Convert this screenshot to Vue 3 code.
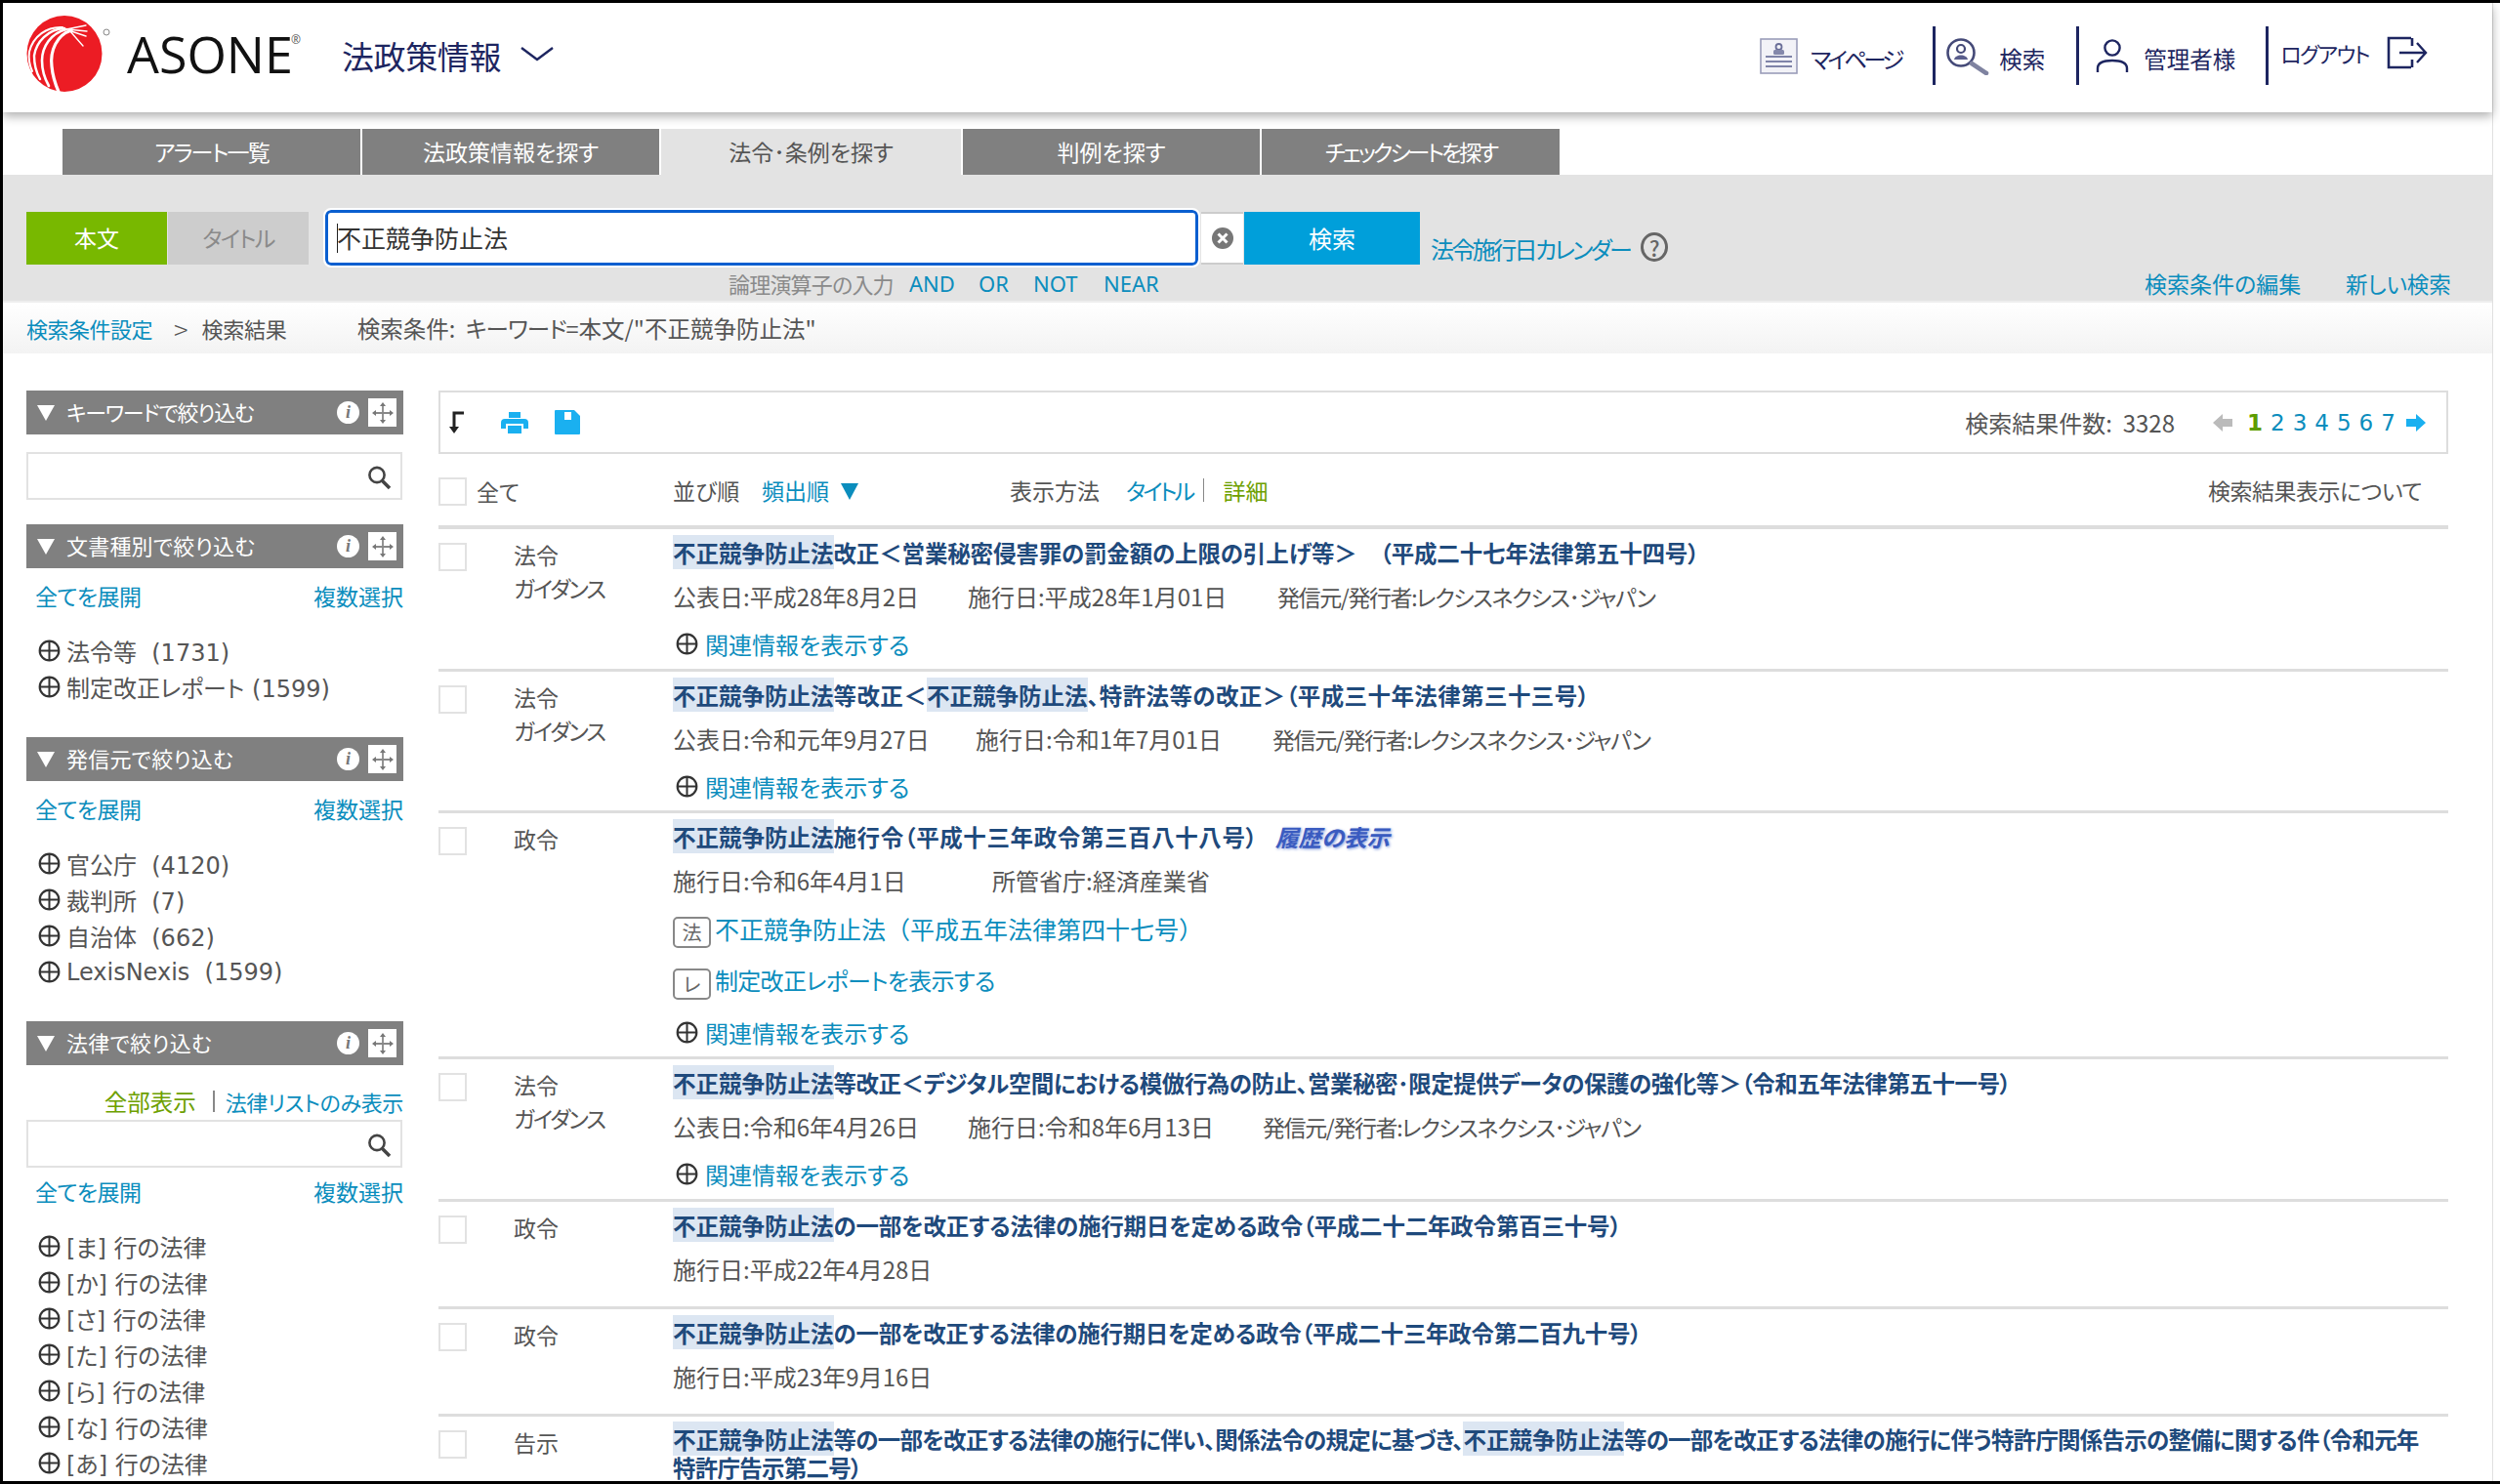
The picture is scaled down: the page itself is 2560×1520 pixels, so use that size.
<template>
  <div class="frame">
    <div class="page">
      <!-- header -->
      <header class="top">
        <div class="logo">
          <svg class="logo-mark" viewBox="0 0 110 95" width="110" height="95">
            <ellipse cx="50" cy="45" rx="38.5" ry="39" fill="#ec1c24" />
            <g fill="none" stroke="#fff" stroke-linecap="round">
              <path d="M57 21C42 26 35 42 37 58C38 69 41 77 44 84" stroke-width="3.2" />
              <path d="M52 20C36 24 27 38 27 52C27 63 30 71 34 78" stroke-width="2.6" />
              <path d="M50 19C33 20 21 33 19 47C19 56 21 64 25 71" stroke-width="2.4" />
              <path d="M48 18C32 17 18 27 14 43C13 50 14 56 17 63" stroke-width="2" />
              <path d="M52 20L72 16M53 20L73 22M54 21L72 27M55 21L69 37" stroke-width="1.4" />
            </g>
            <circle cx="93" cy="23" r="3" fill="none" stroke="#888" stroke-width="1" />
          </svg>
          <span class="logo-text">ASONE<sup>®</sup></span>
        </div>
        <div class="app-name">法政策情報</div>
        <svg class="chevron" width="36" height="16" viewBox="0 0 36 16">
          <path d="M2 2L18 14L34 2" fill="none" stroke="#1d2560" stroke-width="2.4" />
        </svg>

        <nav class="top-nav">
          <a class="nav-item mypage">
            <svg width="39" height="37" viewBox="0 0 39 37">
              <rect x="1" y="1" width="37" height="35" fill="#f2f2f7" stroke="#9a9db9" stroke-width="1.6" />
              <circle cx="19.5" cy="9" r="3" fill="none" stroke="#6a6e98" stroke-width="1.8" />
              <rect x="14" y="12" width="11" height="5" rx="1.5" fill="#8488ab" />
              <path d="M6 19H33M6 24H33M6 29H33" stroke="#7f83a8" stroke-width="2" />
            </svg>
            <span>マイページ</span>
          </a>
          <a class="nav-item search">
            <svg width="44" height="39" viewBox="0 0 44 39">
              <circle cx="15" cy="16" r="13.5" fill="none" stroke="#454a78" stroke-width="2.6" />
              <circle cx="15" cy="12" r="4" fill="none" stroke="#454a78" stroke-width="2.2" />
              <path d="M8 23C9 17 21 17 22 23Z" fill="#5a5e8c" />
              <path d="M26 27L41 37" stroke="#7f83a0" stroke-width="4.6" stroke-linecap="round" />
            </svg>
            <span>検索</span>
          </a>
          <a class="nav-item admin">
            <svg width="34" height="35" viewBox="0 0 34 35">
              <circle cx="17" cy="9" r="7.6" fill="none" stroke="#1d2560" stroke-width="2.4" />
              <path d="M2 34V30C2 24 8 22 17 22C26 22 32 24 32 30V34" fill="none" stroke="#1d2560" stroke-width="2.4" />
            </svg>
            <span>管理者様</span>
          </a>
          <a class="nav-item logout">
            <span>ログアウト</span>
            <svg width="42" height="34" viewBox="0 0 42 34">
              <path d="M25 2H2V32H25M26 32V24M26 10V2" fill="none" stroke="#1d2560" stroke-width="2.6" />
              <path d="M13 17H39M31 7L40 17L31 27" fill="none" stroke="#1d2560" stroke-width="2.4" />
            </svg>
          </a>
        </nav>
      </header>

      <!-- tabs -->
      <div class="tabs">
        <a
          v-for="tab in tabs"
          :key="tab.label"
          class="tab"
          :class="{ active: tab.active }"
          :style="{ width: tab.width + 'px', letterSpacing: tab.ls + 'px' }"
        >{{ tab.label }}</a>
      </div>

      <!-- search panel -->
      <section class="search-panel">
        <div class="search-row">
          <button class="mode on">本文</button>
          <button class="mode kana">タイトル</button>
          <div class="keyword"><span class="caret"></span>不正競争防止法</div>
          <div class="clear">
            <svg width="24" height="24" viewBox="0 0 24 24">
              <circle cx="12" cy="12" r="11" fill="#777" />
              <path d="M7.5 7.5L16.5 16.5M16.5 7.5L7.5 16.5" stroke="#fff" stroke-width="3" />
            </svg>
          </div>
          <button class="go">検索</button>
          <a class="calendar">法令施行日カレンダー</a>
          <span class="help">?</span>
        </div>
        <div class="op-row">
          <span class="op-label">論理演算子の入力</span>
          <a class="op and">AND</a>
          <a class="op or">OR</a>
          <a class="op not">NOT</a>
          <a class="op near">NEAR</a>
          <a class="edit">検索条件の編集</a>
          <a class="fresh">新しい検索</a>
        </div>
      </section>

      <div class="crumb">
        <a class="crumb-link">検索条件設定</a>
        <span class="crumb-gt">&gt;</span>
        <span class="crumb-now">検索結果</span>
        <span class="crumb-cond">検索条件:&nbsp;&nbsp;<span class="crumb-kana">キーワード</span>=本文/"不正競争防止法"</span>
      </div>

      <div class="body">
        <!-- filter column -->
        <aside class="side">
          <div v-for="panel in panels" :key="panel.title" class="panel">
            <div class="panel-head">
              <span class="tri"></span>
              <span class="panel-title" :style="{ letterSpacing: panel.ls + 'px' }">{{ panel.title }}</span>
              <span class="info">i</span>
              <span class="move">
                <svg width="24" height="24" viewBox="0 0 24 24">
                  <path d="M12 3V21M3 12H21" stroke="#888" stroke-width="1.8" />
                  <path d="M12 1L15 5H9ZM12 23L15 19H9ZM1 12L5 9V15ZM23 12L19 9V15Z" fill="#777" />
                </svg>
              </span>
            </div>
            <div v-if="panel.lawLinks" class="law-links">
              <a class="green">全部表示</a>
              <span class="bar"></span>
              <a class="list-only">法律リストのみ表示</a>
            </div>
            <div v-if="panel.search" class="side-search" :class="{ tight: panel.lawLinks }">
              <svg width="26" height="26" viewBox="0 0 26 26">
                <circle cx="11" cy="10.5" r="7.6" fill="none" stroke="#444" stroke-width="2.6" />
                <path d="M16.5 16.5L24 24" stroke="#444" stroke-width="3.6" />
              </svg>
            </div>
            <div v-if="panel.items" class="side-links">
              <a>全てを展開</a>
              <a>複数選択</a>
            </div>
            <ul v-if="panel.items" class="side-list">
              <li v-for="item in panel.items" :key="item">
                <svg class="plus" width="23" height="23" viewBox="0 0 23 23">
                  <circle cx="11.5" cy="11.5" r="9.8" fill="none" stroke="#333" stroke-width="2.2" />
                  <path d="M11.5 1V22M1 11.5H22" stroke="#333" stroke-width="2" />
                </svg>
                <span>{{ item }}</span>
              </li>
            </ul>
          </div>
        </aside>

        <!-- results -->
        <main class="results">
          <div class="toolbar">
            <svg class="tool-sort" width="18" height="24" viewBox="0 0 18 24">
              <path d="M16 2H6V20" fill="none" stroke="#222" stroke-width="3" />
              <path d="M1 16H11L6 23Z" fill="#222" />
            </svg>
            <svg class="tool-print" width="28" height="24" viewBox="0 0 28 24">
              <path d="M8 1H20V7H8ZM4 8H24Q28 8 28 12V18H23V13H5V18H0V12Q0 8 4 8ZM7 15H21V23H7Z" fill="#1ab0f0" />
            </svg>
            <svg class="tool-save" width="26" height="25" viewBox="0 0 26 25">
              <path d="M1 0H20L26 6V24Q26 25 25 25H1Q0 25 0 24V1Q0 0 1 0Z" fill="#1ab0f0" />
              <rect x="10" y="2" width="7" height="8" fill="#fff" />
            </svg>
            <span class="count">検索結果件数:&nbsp;&nbsp;3328</span>
            <svg class="arrow" width="20" height="20" viewBox="0 0 20 20">
              <path d="M0 10L10 1V6H20V14H10V19Z" fill="#bbb" />
            </svg>
            <span class="pages">
              <a
                v-for="n in 7"
                :key="n"
                class="page-no"
                :class="{ current: n === 1 }"
              >{{ n }}</a>
            </span>
            <svg class="arrow next" width="20" height="20" viewBox="0 0 20 20">
              <path d="M20 10L10 1V6H0V14H10V19Z" fill="#1ab0f0" />
            </svg>
          </div>

          <div class="sort-bar">
            <span class="check"></span>
            <span class="all">全て</span>
            <span class="sort-label">並び順</span>
            <a class="sort-value">頻出順</a>
            <span class="sort-tri"></span>
            <span class="view-label">表示方法</span>
            <a class="view-title">タイトル</a>
            <span class="view-bar"></span>
            <a class="view-detail">詳細</a>
            <span class="about">検索結果表示について</span>
          </div>

          <div v-for="(row, i) in rows" :key="i" class="row" :class="row.cls">
            <span class="check"></span>
            <div class="kind">
              <div v-for="k in row.kind" :key="k" :class="{ narrow: k.length > 2 }">{{ k }}</div>
            </div>
            <div class="row-main">
              <div class="title" :style="{ letterSpacing: row.ls + 'px' }">
                <template v-for="(part, j) in row.title" :key="j">
                  <mark v-if="part.hl">{{ part.hl }}</mark>
                  <template v-else>{{ part }}</template>
                </template>
                <em v-if="row.history" class="history">履歴の表示</em>
              </div>
              <div class="meta">
                <span
                  v-for="(m, j) in row.meta"
                  :key="j"
                  :class="{ source: m.t === LEXIS }"
                  :style="{ width: m.w + 'px' }"
                >{{ m.t }}</span>
              </div>
              <div v-for="doc in row.docs" :key="doc.mark" class="doc" :class="doc.cls">
                <span class="doc-mark">{{ doc.mark }}</span>
                <a>{{ doc.text }}</a>
              </div>
              <div v-if="row.related" class="related">
                <svg class="plus" width="23" height="23" viewBox="0 0 23 23">
                  <circle cx="11.5" cy="11.5" r="9.8" fill="none" stroke="#333" stroke-width="2.2" />
                  <path d="M11.5 1V22M1 11.5H22" stroke="#333" stroke-width="2" />
                </svg>
                <a>関連情報を表示する</a>
              </div>
            </div>
          </div>
        </main>
      </div>
    </div>
  </div>
</template>

<script setup>
const tabs = [
  { label: "アラート一覧", width: 307, ls: -1.8 },
  { label: "法政策情報を探す", width: 306, ls: 0 },
  { label: "法令･条例を探す", width: 309, ls: 0 },
  { label: "判例を探す", width: 306, ls: 0 },
  { label: "チェックシートを探す", width: 307, ls: -3 },
];
tabs[2].active = true;

const gyo = ["ま", "か", "さ", "た", "ら", "な", "あ"].map((k) => `[${k}] 行の法律`);

const panels = [
  { title: "キーワードで絞り込む", search: true, ls: -1.3 },
  { title: "文書種別で絞り込む", ls: 0.2, items: ["法令等  (1731)", "制定改正レポート (1599)"] },
  { title: "発信元で絞り込む", ls: 0.2, items: ["官公庁  (4120)", "裁判所  (7)", "自治体  (662)", "LexisNexis  (1599)"] },
  { title: "法律で絞り込む", ls: 0.2, lawLinks: true, search: true, items: gyo },
];

const HL = { hl: "不正競争防止法" };
const LEXIS = "発信元/発行者:レクシスネクシス･ジャパン";

const rows = [
  {
    cls: "first",
    ls: -0.15,
    kind: ["法令", "ガイダンス"],
    title: [HL, "改正＜営業秘密侵害罪の罰金額の上限の引上げ等＞　（平成二十七年法律第五十四号）"],
    meta: [{ t: "公表日:平成28年8月2日", w: 302 }, { t: "施行日:平成28年1月01日", w: 317 }, { t: LEXIS }],
    related: true,
  },
  {
    ls: 0.4,
    kind: ["法令", "ガイダンス"],
    title: [HL, "等改正＜", HL, "、特許法等の改正＞（平成三十年法律第三十三号）"],
    meta: [{ t: "公表日:令和元年9月27日", w: 310 }, { t: "施行日:令和1年7月01日", w: 304 }, { t: LEXIS }],
    related: true,
  },
  {
    cls: "tall",
    ls: 0.6,
    kind: ["政令"],
    title: [HL, "施行令（平成十三年政令第三百八十八号）"],
    history: true,
    meta: [{ t: "施行日:令和6年4月1日", w: 327 }, { t: "所管省庁:経済産業省" }],
    docs: [
      { mark: "法", text: "不正競争防止法（平成五年法律第四十七号）", cls: "full" },
      { mark: "レ", text: "制定改正レポートを表示する" },
    ],
    related: true,
  },
  {
    cls: "first",
    ls: -0.47,
    kind: ["法令", "ガイダンス"],
    title: [HL, "等改正＜デジタル空間における模倣行為の防止、営業秘密･限定提供データの保護の強化等＞（令和五年法律第五十一号）"],
    meta: [{ t: "公表日:令和6年4月26日", w: 302 }, { t: "施行日:令和8年6月13日", w: 302 }, { t: LEXIS }],
    related: true,
  },
  {
    cls: "short",
    ls: -0.2,
    kind: ["政令"],
    title: [HL, "の一部を改正する法律の施行期日を定める政令（平成二十二年政令第百三十号）"],
    meta: [{ t: "施行日:平成22年4月28日" }],
  },
  {
    cls: "short",
    ls: -0.27,
    kind: ["政令"],
    title: [HL, "の一部を改正する法律の施行期日を定める政令（平成二十三年政令第二百九十号）"],
    meta: [{ t: "施行日:平成23年9月16日" }],
  },
  {
    cls: "last",
    ls: -0.76,
    kind: ["告示"],
    title: [HL, "等の一部を改正する法律の施行に伴い、関係法令の規定に基づき、", HL, "等の一部を改正する法律の施行に伴う特許庁関係告示の整備に関する件（令和元年特許庁告示第二号）"],
    meta: [],
  },
];
</script>

<style>
html,
body {
  margin: 0;
  background: #fff;
}
</style>

<style scoped>
.frame {
  width: 2560px;
  height: 1520px;
  box-sizing: border-box;
  border-top: 3px solid #000;
  border-bottom: 3px solid #000;
  border-left: 3px solid #000;
  background: #fff;
  overflow: hidden;
  font-family: "Noto Sans CJK JP", sans-serif;
  font-feature-settings: "palt";
  color: #555;
}
.page {
  width: 2549px;
  height: 100%;
  border-right: 1px solid #e0e0e0;
  box-sizing: content-box;
}
a {
  color: #0b8dbd;
}

/* header */
.top {
  height: 112px;
  display: flex;
  align-items: flex-start;
  background: #fff;
  box-shadow: 0 4px 10px rgba(0, 0, 0, 0.32);
  position: relative;
}
.logo {
  display: flex;
  width: 300px;
}
.logo-mark {
  margin: 7px 0 0 13px;
  flex: none;
}
.logo-text {
  margin: 17px 0 0 4px;
  font-family: "Open Sans", sans-serif;
  font-size: 52px;
  line-height: 70px;
  letter-spacing: 0;
  color: #111;
}
.logo-text sup {
  font-size: 12px;
  margin-left: -2px;
  vertical-align: 30px;
  line-height: 0;
  color: #555;
}
.app-name {
  margin: 32px 0 0 47px;
  font-size: 33px;
  line-height: 44px;
  color: #1d2560;
  letter-spacing: -0.4px;
}
.chevron {
  margin: 44px 0 0 19px;
}
.top-nav {
  margin-left: auto;
  margin-right: 66px;
  margin-top: 24px;
  display: flex;
  height: 60px;
}
.nav-item {
  display: flex;
  align-items: center;
  color: #1d2560;
  font-size: 23.5px;
}
.nav-item span {
  padding-top: 6px;
}
.mypage {
  gap: 13px;
  padding-right: 33px;
}
.mypage span {
  letter-spacing: -3.8px;
}
.search {
  gap: 10px;
  padding: 0 32px 0 11px;
  border-left: 3px solid #1d2560;
}
.admin {
  gap: 15px;
  padding: 0 31px 0 17px;
  border-left: 3px solid #1d2560;
}
.logout {
  gap: 18px;
  padding-left: 12px;
  border-left: 3px solid #1d2560;
  font-size: 22px;
}
.logout span {
  padding: 0 0 6px;
  letter-spacing: -1.6px;
}
.logout svg {
  margin-top: -6px;
}

/* tabs */
.tabs {
  display: flex;
  gap: 1px;
  padding: 17px 0 0 61px;
  height: 47px;
}
.tab {
  height: 47px;
  box-sizing: border-box;
  margin-right: -1px;
  padding-bottom: 2px;
  border-right: 2px solid #fff;
  background: #808080;
  color: #fff;
  font-size: 23px;
  display: flex;
  align-items: center;
  justify-content: center;
}
.tab.active {
  background: #e3e3e3;
  color: #555;
}

/* search panel */
.search-panel {
  height: 131px;
  box-sizing: border-box;
  margin-top: 0;
  background: #e3e3e3;
  border-bottom: 2px solid #eee;
  padding: 38px 0 0 24px;
}
.search-row {
  display: flex;
  align-items: flex-start;
  height: 54px;
}
.mode {
  width: 144px;
  height: 54px;
  margin-right: 1px;
  border: none;
  padding: 0 0 2px;
  background: #cdcdcd;
  color: #8a8a8a;
  font: inherit;
  font-size: 23px;
  font-feature-settings: "palt";
}
.mode.kana {
  letter-spacing: -1.5px;
}
.mode.on {
  background: #78b800;
  color: #fff;
}
.keyword {
  width: 894px;
  height: 57px;
  margin: -2px 3px 0 16px;
  box-sizing: border-box;
  border: 3px solid #0a5fd0;
  border-radius: 6px;
  outline: 2px solid #fff;
  background: #fff;
  color: #333;
  font-size: 25px;
  line-height: 51px;
  padding-left: 9px;
  display: flex;
  align-items: center;
}
.caret {
  width: 1px;
  height: 30px;
  background: #222;
  margin-right: -1px;
}
.clear {
  width: 43px;
  height: 54px;
  box-sizing: border-box;
  background: #fff;
  border-top: 2px solid #ccc;
  border-bottom: 2px solid #ccc;
  display: flex;
  align-items: center;
  justify-content: center;
}
.go {
  width: 180px;
  height: 54px;
  margin-left: 1px;
  border: none;
  padding: 0 0 2px;
  background: #009fda;
  color: #fff;
  font: inherit;
  font-size: 24px;
}
.calendar {
  margin: 22px 0 0 11px;
  font-size: 24px;
  line-height: 32px;
  letter-spacing: -2.6px;
}
.help {
  width: 28px;
  height: 30px;
  margin: 21px 0 0 11px;
  box-sizing: border-box;
  border: 3px solid #666;
  border-radius: 50%;
  font-size: 22px;
  font-weight: 500;
  line-height: 24px;
  text-align: center;
  color: #666;
}
.op-row {
  display: flex;
  align-items: center;
  height: 32px;
  margin-top: -14px;
  padding-top: 17px;
  box-sizing: content-box;
  font-size: 22px;
}
.op-label {
  margin-left: 719px;
  width: 185px;
  color: #8a8a8a;
  letter-spacing: -0.8px;
}
.op {
  font-family: "Noto Sans", sans-serif;
  letter-spacing: 0;
}
.and {
  width: 71px;
}
.or {
  width: 56px;
}
.not {
  width: 72px;
}
.near {
  width: 1066px;
}
.edit {
  width: 206px;
  font-size: 23px;
}
.fresh {
  font-size: 22.5px;
}

/* breadcrumb */
.crumb {
  height: 52px;
  box-sizing: border-box;
  background: linear-gradient(#fff, #f3f3f3);
  display: flex;
  align-items: center;
  padding: 0 0 0 24px;
  font-size: 22px;
}
.crumb-link {
  letter-spacing: -0.5px;
}
.crumb-gt {
  margin: 0 14px 0 22px;
  font-size: 27px;
  font-weight: 300;
}
.crumb-now {
  letter-spacing: -0.2px;
}
.crumb-cond {
  margin-left: 72px;
  font-size: 23.5px;
}
.crumb-kana {
  letter-spacing: -1px;
}

/* layout */
.body {
  display: flex;
  padding: 38px 0 0 24px;
}
.side {
  width: 386px;
  flex: none;
}
.results {
  width: 2058px;
  margin-left: 36px;
}

/* filter panels */
.panel {
  margin-bottom: 33px;
}
.panel:first-child {
  margin-bottom: 25px;
}
.panel:nth-child(3) {
  margin-bottom: 32px;
}
.panel-head {
  height: 45px;
  background: #808080;
  display: flex;
  align-items: center;
  color: #fff;
  font-size: 22px;
  padding-bottom: 2px;
  box-sizing: border-box;
}
.tri {
  margin: 2px 12px 0 11px;
  border-left: 9px solid transparent;
  border-right: 9px solid transparent;
  border-top: 16px solid #fff;
}
.panel-title {
  flex: 1;
  padding-bottom: 2px;
}
.info {
  width: 23px;
  height: 23px;
  margin: 2px 9px 0 0;
  border-radius: 50%;
  background: #fff;
  color: #777;
  font: italic bold 18px/23px "Liberation Serif", serif;
  text-align: center;
}
.move {
  width: 29px;
  height: 29px;
  margin: 2px 7px 0 0;
  background: #fff;
  display: flex;
  align-items: center;
  justify-content: center;
}
.law-links {
  display: flex;
  justify-content: flex-end;
  align-items: center;
  height: 32px;
  margin-top: 21px;
  font-size: 22px;
}
.law-links .green {
  color: #6da000;
  font-size: 23.5px;
}
.law-links .bar {
  width: 2px;
  height: 22px;
  margin: 0 11px 0 17px;
  background: #888;
}
.law-links .list-only {
  letter-spacing: -0.35px;
}
.side-search {
  width: 385px;
  height: 49px;
  box-sizing: border-box;
  margin-top: 18px;
  border: 2px solid #e2e2e2;
  display: flex;
  align-items: center;
  justify-content: flex-end;
  padding: 3px 9px 0 0;
}
.side-search.tight {
  margin-top: 3px;
}
.side-links {
  display: flex;
  justify-content: space-between;
  height: 30px;
  line-height: 30px;
  margin-top: 13px;
  padding-left: 9px;
  font-size: 23px;
}
.side-links a:first-child {
  letter-spacing: -0.5px;
}
.side-search + .side-links {
  margin-top: 9px;
}
.side-list {
  list-style: none;
  margin: 23px 0 0;
  padding: 0 0 0 12px;
  font-family: "DejaVu Sans", "Noto Sans CJK JP", sans-serif;
  font-size: 24px;
  color: #555;
}
.side-list li {
  display: flex;
  align-items: center;
  gap: 6px;
  height: 37px;
  white-space: pre;
}
.plus {
  flex: none;
}

/* toolbar */
.toolbar {
  height: 65px;
  box-sizing: border-box;
  border: 2px solid #ddd;
  display: flex;
  align-items: center;
  padding-left: 8px;
}
.tool-print {
  margin-left: 36px;
}
.tool-save {
  margin-left: 27px;
}
.count {
  margin-left: auto;
  font-size: 24px;
  color: #555;
}
.arrow {
  margin-left: 39px;
}
.pages {
  display: flex;
  margin-left: 15px;
  width: 163px;
  gap: 8px;
  font-family: "DejaVu Sans", sans-serif;
  font-size: 23px;
}
.page-no.current {
  color: #5d9c00;
  font-weight: bold;
}
.arrow.next {
  margin-left: 0;
  margin-right: 21px;
}

/* sort row */
.sort-bar {
  height: 73px;
  display: flex;
  align-items: center;
  font-size: 23px;
}
.check {
  width: 29px;
  height: 29px;
  flex: none;
  box-sizing: border-box;
  border: 2px solid #e2e2e2;
  background: #fff;
}
.sort-bar .check {
  margin-top: 4px;
}
.all {
  margin-left: 10px;
  width: 201px;
  padding-top: 2px;
}
.sort-label {
  width: 91px;
}
.sort-value {
  color: #0b8dbd;
}
.sort-tri {
  margin: 3px 0 0 12px;
  border-left: 9px solid transparent;
  border-right: 9px solid transparent;
  border-top: 17px solid #0b8dbd;
}
.view-label {
  margin-left: 155px;
  width: 119px;
}
.view-title {
  letter-spacing: -2.8px;
}
.view-bar {
  width: 1px;
  height: 24px;
  margin: 0 19px 0 11px;
  background: #888;
}
.view-detail {
  color: #6da000;
}
.about {
  margin-left: auto;
  margin-right: 27px;
  letter-spacing: -0.5px;
}

/* result rows */
.row {
  display: flex;
  align-items: flex-start;
  border-top: 3px solid #ddd;
  padding: 9px 0 10px;
}
.sort-bar + .row {
  border-top-width: 4px;
}
.row > .check {
  margin-top: 5px;
}
.kind {
  width: 163px;
  margin-left: 48px;
  flex: none;
  font-size: 23px;
  line-height: 34px;
}
.kind .narrow {
  letter-spacing: -2px;
}
.row-main {
  flex: 1;
  padding-right: 18px;
}
.title {
  font-size: 23.5px;
  line-height: 30px;
  font-weight: 700;
  color: #1f4a7c;
}
.title mark {
  background: #dce6f2;
  color: inherit;
  padding: 0;
  letter-spacing: 0;
  box-shadow: 0 -1px 0 #dce6f2;
}
.history {
  margin-left: 18px;
  font-size: 23.5px;
  font-weight: 700;
  letter-spacing: 0;
  color: #3a5bc0;
  text-shadow: 1px 1px 3px #7a93d8;
}
.meta {
  margin-top: 15px;
  display: flex;
  font-size: 24px;
  line-height: 30px;
  color: #555;
}
.meta .source {
  font-size: 23px;
  letter-spacing: -1.4px;
}
.related {
  margin-top: 18px;
  height: 30px;
  display: flex;
  align-items: center;
  gap: 7px;
  padding-left: 3px;
  font-size: 24px;
}
.doc {
  margin-top: 19px;
  display: flex;
  align-items: flex-start;
  height: 34px;
  font-size: 24px;
  line-height: 30px;
  gap: 4px;
  letter-spacing: -0.7px;
}
.doc.full {
  font-size: 25px;
  letter-spacing: 0;
  font-feature-settings: normal;
}
.doc + .doc {
  margin-top: 19px;
}
.doc-mark {
  width: 39px;
  height: 32px;
  margin-top: 3px;
  box-sizing: border-box;
  border: 2px solid #888;
  border-radius: 5px;
  font-size: 20px;
  line-height: 28px;
  letter-spacing: 0;
  text-align: center;
  color: #666;
}
.tall .related {
  margin-top: 19px;
}
.first {
  padding-bottom: 11px;
}
.short {
  padding-bottom: 23px;
}
.last .title {
  line-height: 29px;
}
.last .meta {
  display: none;
}
</style>
